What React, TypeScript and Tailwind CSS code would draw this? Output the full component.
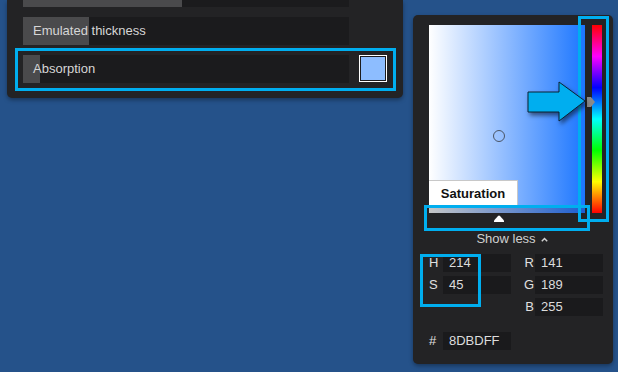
import React from "react";

const font = { fontFamily: '"Liberation Sans", Arial, sans-serif' };

function SliderRow({ label, fill }: { label?: string; fill: number }) {
  return (
    <div className="relative h-[28px] w-[326px] bg-[#1b1b1d]">
      <div className="absolute left-0 top-0 h-full bg-[#4a4a4c]" style={{ width: fill }} />
      {label && (
        <span className="absolute left-[10px] top-0 flex h-full items-center text-[13px] text-[#d6d6d6]">
          {label}
        </span>
      )}
    </div>
  );
}

function Field({ label, value, right }: { label: string; value: string; right?: boolean }) {
  return (
    <div className="flex h-[18px] items-center">
      <span
        className={
          right
            ? "w-[14px] pr-[1px] text-right text-[13px] text-[#e0e0e0]"
            : "w-[14px] text-[13px] text-[#e0e0e0]"
        }
      >
        {label}
      </span>
      <div className="flex h-[18px] w-[68px] items-center bg-[#1a1a1c] pl-[6px] text-[13px] text-[#dcdcdc]">
        {value}
      </div>
    </div>
  );
}

export default function App() {
  return (
    <div className="relative h-[372px] w-[618px] overflow-hidden bg-[#25528a]" style={font}>
      <div className="flex items-start">
        {/* material panel */}
        <div className="ml-[7px] flex h-[98px] w-[396px] flex-col gap-[10px] rounded-b-[5px] bg-[#232325] pl-[16px] shadow-[0_2px_4px_rgba(0,0,0,0.35)]">
          <div className="relative h-[7px] w-[326px] bg-[#1b1b1d]">
            <div className="h-full w-[159px] bg-[#4a4a4c]" />
          </div>
          <SliderRow label="Emulated thickness" fill={66} />
          <div className="flex items-start gap-[10px]">
            <SliderRow label="Absorption" fill={17} />
            <div className="h-[27px] w-[28px] border border-white bg-[#1b1b1d] p-[1px]">
              <div className="h-full w-full bg-[#8dbdff]" />
            </div>
          </div>
        </div>

        {/* color picker */}
        <div className="ml-[10px] mt-[15px] flex h-[349px] w-[200px] flex-col rounded-[5px] bg-[#232325] pl-[16px] pt-[10px] shadow-[0_2px_4px_rgba(0,0,0,0.35)]">
          <div className="flex gap-[7px]">
            <div className="flex w-[156px] flex-col">
              <div className="relative h-[182px] w-[156px] bg-[linear-gradient(to_right,#ffffff,#1c76ff)]">
                <div className="absolute left-[64px] top-[105px] h-[12px] w-[12px] rounded-full border border-[#4a5566]" />
                <div className="absolute bottom-0 left-0 flex h-[27px] w-[89px] items-center justify-center border-r border-t border-[#c8c8c8] bg-white text-[13px] font-bold text-[#111]">
                  Saturation
                </div>
              </div>
              <div className="h-[6px] w-[156px] bg-[linear-gradient(to_right,#c6c6c6,#1d5ed2)]" />
              <div className="relative h-[10px]">
                <svg className="absolute left-[65px] top-[2px]" width="10" height="7" viewBox="0 0 10 7">
                  <path d="M0 7 L0 5.5 L4 1 Q5 0 6 1 L10 5.5 L10 7 Z" fill="#ffffff" />
                </svg>
              </div>
            </div>
            <div className="relative h-[188px] w-[10px] bg-[linear-gradient(to_bottom,#ff0000,#ff00ff,#0000ff,#00ffff,#00ff00,#ffff00,#ff0000)]">
              <svg className="absolute left-[-5px] top-[72px]" width="8" height="10" viewBox="0 0 8 10">
                <path d="M0 0 H4 L8 5 L4 10 H0 Z" fill="#8a8a8a" />
              </svg>
            </div>
          </div>

          <div className="mt-[8px] flex h-[16px] items-center justify-center gap-[5px] pr-[18px] text-[13px] text-[#d0d0d0]">
            <span>Show less</span>
            <svg width="7" height="5" viewBox="0 0 7 5">
              <path d="M0.8 4.2 L3.5 1.5 L6.2 4.2" fill="none" stroke="#d0d0d0" strokeWidth="1.5" />
            </svg>
          </div>

          <div className="mt-[7px] flex gap-[10px]">
            <div className="flex flex-col gap-[4px]">
              <Field label="H" value="214" />
              <Field label="S" value="45" />
            </div>
            <div className="flex flex-col gap-[4px]">
              <Field label="R" value="141" right />
              <Field label="G" value="189" right />
              <Field label="B" value="255" right />
            </div>
          </div>

          <div className="mt-[16px]">
            <Field label="#" value="8DBDFF" />
          </div>
        </div>
      </div>

      {/* annotation overlays */}
      <div className="absolute left-[15px] top-[48px] h-[43px] w-[381px] border-[3px] border-[#00aeef]" />
      <div className="absolute left-[578px] top-[16px] h-[206px] w-[31px] border-[3px] border-[#00aeef]" />
      <div className="absolute left-[424px] top-[205px] h-[26px] w-[166px] border-[3px] border-[#00aeef]" />
      <div className="absolute left-[420px] top-[254px] h-[53px] w-[61px] border-[3px] border-[#00aeef]" />
      <svg
        className="absolute left-[520px] top-[76px] drop-shadow-[2px_3px_2px_rgba(0,0,0,0.5)]"
        width="72"
        height="52"
        viewBox="0 0 72 52"
      >
        <path d="M8 16 H39 V6 L65 25 L39 45 V36 H8 Z" fill="#00aeef" stroke="#0b2233" strokeWidth="1" />
      </svg>
    </div>
  );
}
